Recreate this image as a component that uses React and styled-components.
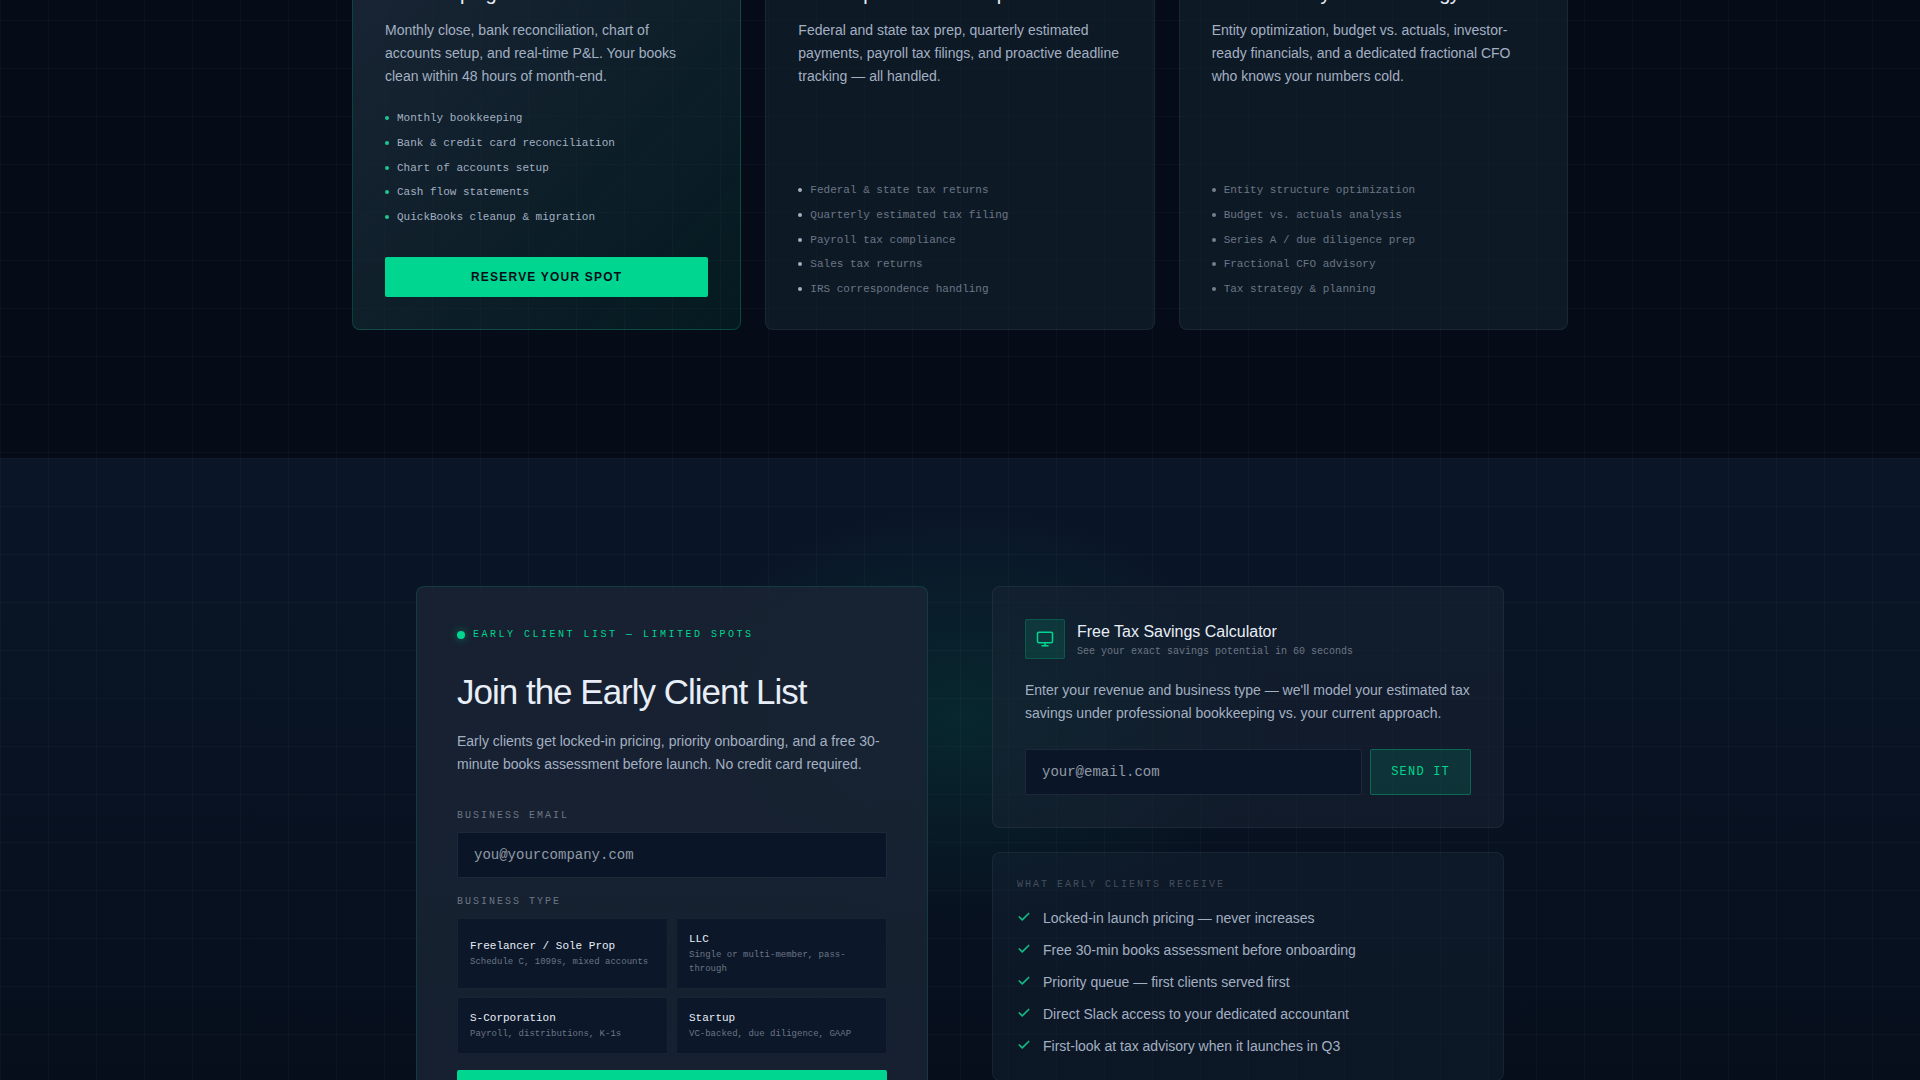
import React, { useState } from "react";
import styled, { createGlobalStyle } from "styled-components";
import { Check, Monitor } from "lucide-react";

const services = [
  {
    name: "Bookkeeping",
    text:
      "Monthly close, bank reconciliation, chart of accounts setup, and real-time P&L. Your books clean within 48 hours of month-end.",
    items: [
      "Monthly bookkeeping",
      "Bank & credit card reconciliation",
      "Chart of accounts setup",
      "Cash flow statements",
      "QuickBooks cleanup & migration"
    ],
    dot: "#1fc493",
    featured: true
  },
  {
    name: "Tax Preparation & Compliance",
    text:
      "Federal and state tax prep, quarterly estimated payments, payroll tax filings, and proactive deadline tracking — all handled.",
    items: [
      "Federal & state tax returns",
      "Quarterly estimated tax filing",
      "Payroll tax compliance",
      "Sales tax returns",
      "IRS correspondence handling"
    ],
    dot: "#a3b0c2"
  },
  {
    name: "CFO Advisory & Tax Strategy",
    text:
      "Entity optimization, budget vs. actuals, investor-ready financials, and a dedicated fractional CFO who knows your numbers cold.",
    items: [
      "Entity structure optimization",
      "Budget vs. actuals analysis",
      "Series A / due diligence prep",
      "Fractional CFO advisory",
      "Tax strategy & planning"
    ],
    dot: "#75808f"
  }
];

const businessTypes = [
  { name: "Freelancer / Sole Prop", hint: "Schedule C, 1099s, mixed accounts" },
  { name: "LLC", hint: "Single or multi-member, pass-through" },
  { name: "S-Corporation", hint: "Payroll, distributions, K-1s" },
  { name: "Startup", hint: "VC-backed, due diligence, GAAP" }
];

const perks = [
  "Locked-in launch pricing — never increases",
  "Free 30-min books assessment before onboarding",
  "Priority queue — first clients served first",
  "Direct Slack access to your dedicated accountant",
  "First-look at tax advisory when it launches in Q3"
];

function App() {
  const [email, setEmail] = useState("");
  const [calcEmail, setCalcEmail] = useState("");
  const [type, setType] = useState("");

  const handleSubmit = event => {
    event.preventDefault();
  };

  return (
    <>
      <GlobalStyle />
      <main>
        <Services>
          <ServiceGrid>
            {services.map(service => (
              <ServiceCard key={service.name} $featured={service.featured}>
                <ServiceName>{service.name}</ServiceName>
                <ServiceText>{service.text}</ServiceText>
                <FeatureList>
                  {service.items.map(item => (
                    <Feature
                      key={item}
                      $dot={service.dot}
                      $bright={service.featured}
                    >
                      {item}
                    </Feature>
                  ))}
                </FeatureList>
                {service.featured && (
                  <ReserveButton type="button">Reserve your spot</ReserveButton>
                )}
              </ServiceCard>
            ))}
          </ServiceGrid>
        </Services>

        <Signup>
          <SignupGrid>
            <JoinCard onSubmit={handleSubmit}>
              <Kicker>
                <LiveDot />
                Early client list — limited spots
              </Kicker>
              <Heading>Join the Early Client List</Heading>
              <Text>
                Early clients get locked-in pricing, priority onboarding, and a
                free 30-minute books assessment before launch. No credit card
                required.
              </Text>
              <Field>
                <Label htmlFor="email">Business email</Label>
                <Input
                  id="email"
                  type="email"
                  value={email}
                  onChange={event => setEmail(event.target.value)}
                  placeholder="you@yourcompany.com"
                />
              </Field>
              <TypeField>
                <Legend id="type-label">Business type</Legend>
                <TypeGrid role="group" aria-labelledby="type-label">
                  {businessTypes.map(option => (
                    <TypeButton
                      key={option.name}
                      type="button"
                      aria-pressed={type === option.name}
                      $active={type === option.name}
                      onClick={() => setType(option.name)}
                    >
                      <TypeName>{option.name}</TypeName>
                      <TypeHint>{option.hint}</TypeHint>
                    </TypeButton>
                  ))}
                </TypeGrid>
              </TypeField>
              <JoinButton type="submit">Join the list</JoinButton>
            </JoinCard>

            <SideColumn>
              <CalculatorCard onSubmit={handleSubmit}>
                <CalculatorHeader>
                  <IconBox>
                    <Monitor size={18} strokeWidth={2} />
                  </IconBox>
                  <div>
                    <CalculatorTitle>Free Tax Savings Calculator</CalculatorTitle>
                    <CalculatorHint>
                      See your exact savings potential in 60 seconds
                    </CalculatorHint>
                  </div>
                </CalculatorHeader>
                <Text>
                  Enter your revenue and business type — we'll model your
                  estimated tax savings under professional bookkeeping vs. your
                  current approach.
                </Text>
                <SendRow>
                  <Input
                    type="email"
                    aria-label="Email for the calculator"
                    value={calcEmail}
                    onChange={event => setCalcEmail(event.target.value)}
                    placeholder="your@email.com"
                  />
                  <SendButton type="submit">Send it</SendButton>
                </SendRow>
              </CalculatorCard>

              <PerksCard>
                <PerksTitle>What early clients receive</PerksTitle>
                <PerkList>
                  {perks.map(perk => (
                    <Perk key={perk}>
                      <Check size={14} strokeWidth={3} />
                      {perk}
                    </Perk>
                  ))}
                </PerkList>
              </PerksCard>
            </SideColumn>
          </SignupGrid>
        </Signup>
      </main>
    </>
  );
}

export default App;

const sans = `"Liberation Sans", Arial, sans-serif`;
const mono = `"Liberation Mono", "Courier New", monospace`;

const gridLines = `
  linear-gradient(rgba(255, 255, 255, 0.025) 1px, transparent 1px),
  linear-gradient(90deg, rgba(255, 255, 255, 0.025) 1px, transparent 1px)
`;

const GlobalStyle = createGlobalStyle`
  * {
    box-sizing: border-box;
    margin: 0;
    padding: 0;
  }
  body {
    background: #050c18;
    color: #e8eef7;
    font-family: ${sans};
    overflow-x: hidden;
  }
`;

/* the page opens scrolled part way into the service cards */
const Services = styled.section`
  margin-top: -76px;
  padding: 22px 32px 128px;
  background-image: ${gridLines};
  background-size: 48px 48px;
`;
const ServiceGrid = styled.div`
  display: grid;
  grid-template-columns: repeat(3, 1fr);
  gap: 24px;
  max-width: 1216px;
  margin: 0 auto;
`;
const ServiceCard = styled.article`
  display: flex;
  flex-direction: column;
  padding: 32px;
  border: 1px solid
    ${props =>
      props.$featured ? "rgba(0, 214, 143, 0.22)" : "rgba(255, 255, 255, 0.06)"};
  border-radius: 8px;
  background: ${props =>
    props.$featured
      ? "linear-gradient(135deg, #1a2535 0%, rgba(0, 214, 143, 0.07) 100%)"
      : "rgba(26, 39, 54, 0.48)"};
`;
const ServiceName = styled.h3`
  margin-bottom: 12px;
  font-size: 20px;
  line-height: 28px;
  font-weight: 400;
  letter-spacing: -0.02em;
`;
const Text = styled.p`
  font-size: 14px;
  line-height: 23px;
  color: #a3b0c2;
`;
const ServiceText = styled(Text)`
  margin-bottom: 22px;
`;
const FeatureList = styled.ul`
  display: flex;
  flex-direction: column;
  justify-content: space-between;
  min-height: 115px;
  margin-top: auto;
  list-style: none;
`;
const Feature = styled.li`
  display: flex;
  align-items: center;
  gap: 8px;
  font-family: ${mono};
  font-size: 11px;
  line-height: 16px;
  color: ${props => (props.$bright ? "#a3b0c2" : "#6b7685")};

  &::before {
    content: "";
    width: 4px;
    height: 4px;
    border-radius: 50%;
    background: ${props => props.$dot};
  }
`;
const SolidButton = styled.button`
  width: 100%;
  border: none;
  border-radius: 2px;
  background: #00d68f;
  color: #050c18;
  font-family: ${sans};
  font-size: 12px;
  font-weight: 700;
  letter-spacing: 0.1em;
  text-transform: uppercase;
  cursor: pointer;
`;
const ReserveButton = styled(SolidButton)`
  height: 40px;
  margin-top: 32px;
`;

const Signup = styled.section`
  padding: 128px 32px;
  background-image: radial-gradient(
      ellipse 450px 300px at 50% 260px,
      rgba(0, 214, 143, 0.1),
      transparent 70%
    ),
    ${gridLines}, linear-gradient(#0a1628, #050c18);
  background-size: 100% 100%, 48px 48px, 48px 48px, 100% 100%;
`;
const SignupGrid = styled.div`
  display: grid;
  grid-template-columns: repeat(2, 1fr);
  align-items: start;
  gap: 64px;
  max-width: 1088px;
  margin: 0 auto;
`;
const JoinCard = styled.form`
  padding: 40px;
  border: 1px solid rgba(0, 214, 143, 0.15);
  border-radius: 8px;
  background: rgba(25, 35, 51, 0.88);
`;
const Kicker = styled.div`
  display: flex;
  align-items: center;
  gap: 8px;
  margin-bottom: 28px;
  font-family: ${mono};
  font-size: 10px;
  line-height: 15px;
  letter-spacing: 0.25em;
  text-transform: uppercase;
  color: #00d68f;
`;
const LiveDot = styled.span`
  width: 8px;
  height: 8px;
  border-radius: 50%;
  background: #00d68f;
  box-shadow: 0 0 8px rgba(0, 214, 143, 0.5);
`;
const Heading = styled.h2`
  margin-bottom: 16px;
  font-size: 35px;
  line-height: 44px;
  font-weight: 400;
  letter-spacing: -1px;
`;
const Field = styled.div`
  display: flex;
  flex-direction: column;
  gap: 8px;
  margin-top: 32px;
`;
const TypeField = styled(Field)`
  margin-top: 16px;
`;
const Label = styled.label`
  font-family: ${mono};
  font-size: 10px;
  line-height: 16px;
  letter-spacing: 0.2em;
  text-transform: uppercase;
  color: #6b7685;
`;
const Legend = styled(Label).attrs({ as: "span" })``;
const Input = styled.input`
  flex: 1 0 auto;
  min-width: 0;
  height: 46px;
  padding: 0 16px;
  border: 1px solid rgba(255, 255, 255, 0.08);
  border-radius: 2px;
  background: #0a1628;
  color: #e8eef7;
  font-family: ${mono};
  font-size: 14px;

  &::placeholder {
    color: #929aa5;
  }
`;
const TypeGrid = styled.div`
  display: grid;
  grid-template-columns: repeat(2, 1fr);
  gap: 8px;
`;
const TypeButton = styled.button`
  padding: 12px;
  border: 1px solid
    ${props => (props.$active ? "#00d68f" : "rgba(255, 255, 255, 0.05)")};
  border-radius: 2px;
  background: #0c1729;
  font-family: ${mono};
  text-align: left;
  cursor: pointer;
`;
const TypeName = styled.span`
  display: block;
  margin-bottom: 1px;
  font-size: 11px;
  line-height: 16px;
  color: #e8eef7;
`;
const TypeHint = styled.span`
  display: block;
  font-size: 9px;
  line-height: 14px;
  color: #6b7685;
`;
const JoinButton = styled(SolidButton)`
  height: 48px;
  margin-top: 16px;
`;

const SideColumn = styled.div`
  display: flex;
  flex-direction: column;
  gap: 24px;
`;
const CalculatorCard = styled.form`
  padding: 32px;
  border: 1px solid rgba(255, 255, 255, 0.06);
  border-radius: 8px;
  background: rgba(26, 36, 51, 0.5);
`;
const CalculatorHeader = styled.div`
  display: flex;
  align-items: center;
  gap: 12px;
  margin-bottom: 20px;
`;
const IconBox = styled.div`
  display: flex;
  align-items: center;
  justify-content: center;
  width: 40px;
  height: 40px;
  border: 1px solid rgba(0, 214, 143, 0.2);
  border-radius: 2px;
  background: rgba(0, 214, 143, 0.13);
  color: #00d68f;
`;
const CalculatorTitle = styled.h3`
  font-size: 16px;
  line-height: 24px;
  font-weight: 400;
`;
const CalculatorHint = styled.p`
  font-family: ${mono};
  font-size: 10px;
  line-height: 15px;
  color: #6b7685;
`;
const SendRow = styled.div`
  display: flex;
  gap: 8px;
  margin-top: 24px;
`;
const SendButton = styled.button`
  padding: 0 20px;
  border: 1px solid rgba(0, 214, 143, 0.33);
  border-radius: 2px;
  background: rgba(0, 214, 143, 0.13);
  color: #00d68f;
  font-family: ${mono};
  font-size: 12px;
  letter-spacing: 0.1em;
  text-transform: uppercase;
  cursor: pointer;
`;
const PerksCard = styled.section`
  padding: 24px;
  border: 1px solid rgba(255, 255, 255, 0.05);
  border-radius: 8px;
  background: rgba(26, 39, 56, 0.35);
`;
const PerksTitle = styled.h4`
  margin-bottom: 16px;
  font-family: ${mono};
  font-size: 10px;
  line-height: 15px;
  font-weight: 400;
  letter-spacing: 0.2em;
  text-transform: uppercase;
  color: #454f5d;
`;
const PerkList = styled.ul`
  display: flex;
  flex-direction: column;
  gap: 12px;
  list-style: none;
`;
const Perk = styled.li`
  display: flex;
  align-items: flex-start;
  gap: 12px;
  font-size: 14px;
  line-height: 20px;
  color: #a3b0c2;

  svg {
    margin-top: 2px;
    color: #12b886;
  }
`;
